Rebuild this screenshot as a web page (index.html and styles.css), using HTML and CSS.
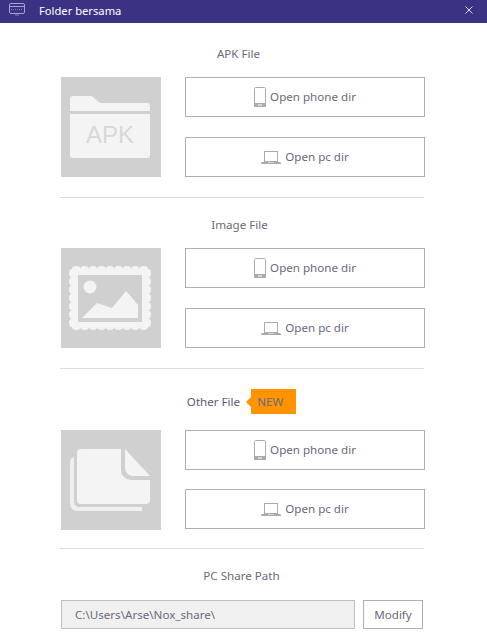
FILE: index.html
```html
<!DOCTYPE html>
<html lang="en">
<head>
    <meta charset="UTF-8">
    <meta name="viewport" content="width=device-width, initial-scale=1.0">
    <title>Folder bersama</title>
    <link rel="stylesheet" href="styles.css">
</head>
<body>
    <svg class="defs" width="0" height="0">
        <symbol id="phone" viewBox="0 0 12 20">
            <rect x="0.500" y="0.500" width="11" height="19" rx="1" fill="none" stroke="#ababab"/>
            <path fill="#ababab" fill-rule="evenodd" d="M0 16h12v3a1 1 0 0 1-1 1H1a1 1 0 0 1-1-1zM4 17.500v1h4v-1z"/>
        </symbol>
        <symbol id="laptop" viewBox="0 0 20 13">
            <rect x="3.500" y="0.500" width="13" height="10" fill="none" stroke="#ababab"/>
            <path fill="#ababab" fill-rule="evenodd" d="M1 11h18l1 1v1H0v-1zM7 11.500v.5h6v-.5z"/>
        </symbol>
    </svg>

    <!-- Title bar -->
    <div class="titlebar">
        <svg class="title-icon" width="16" height="14" viewBox="0 0 16 14">
            <rect x="0.500" y="0.500" width="15" height="10" rx="1.500" fill="none" stroke="#a7a3cf"/>
            <path d="M1 3.500h14" stroke="#a7a3cf"/>
            <path d="M2 6.500h12" stroke="#8480bb" stroke-dasharray="1 1"/>
            <path d="M6 12h4" stroke="#8480bb"/>
        </svg>
        <span class="title-text">Folder bersama</span>
        <svg class="close" width="8" height="8" viewBox="0 0 8 8">
            <path d="M0.500 0.500l7 7M7.500 0.500l-7 7" stroke="#dcdcdc" fill="none"/>
        </svg>
    </div>

    <div class="content">
        <!-- APK section -->
        <h2 class="section-title title-apk">APK File</h2>
        <div class="section-row">
            <div class="tile">
                <svg width="100" height="100" viewBox="0 0 100 100">
                    <path fill="#f4f4f4" d="M9 34V22a3 3 0 0 1 3-3h18a3 3 0 0 1 2 1l6 5a3 3 0 0 0 2 1h46a3 3 0 0 1 3 3v5z"/>
                    <path fill="#f4f4f4" d="M9 37h80v41a3 3 0 0 1-3 3H12a3 3 0 0 1-3-3z"/>
                    <text class="apk-label" x="49" y="66" text-anchor="middle">APK</text>
                </svg>
            </div>
            <div class="buttons">
                <button class="btn"><svg width="12" height="20"><use href="#phone"/></svg>Open phone dir</button>
                <button class="btn"><svg width="20" height="13"><use href="#laptop"/></svg>Open pc dir</button>
            </div>
        </div>
        <hr class="divider">

        <!-- Image section -->
        <h2 class="section-title title-image">Image File</h2>
        <div class="section-row">
            <div class="tile">
                <svg width="100" height="100" viewBox="0 0 100 100">
                    <path fill="#f4f4f4" fill-rule="evenodd" d="M11 21a4.222 3 0 0 1 8.444 0a4.222 3 0 0 1 8.444 0a4.222 3 0 0 1 8.444 0a4.222 3 0 0 1 8.444 0a4.222 3 0 0 1 8.444 0a4.222 3 0 0 1 8.444 0a4.222 3 0 0 1 8.444 0a4.222 3 0 0 1 8.444 0a4.222 3 0 0 1 8.444 0a3 4.143 0 0 1 0 8.286a3 4.143 0 0 1 0 8.286a3 4.143 0 0 1 0 8.286a3 4.143 0 0 1 0 8.286a3 4.143 0 0 1 0 8.286a3 4.143 0 0 1 0 8.286a3 4.143 0 0 1 0 8.286a4.222 3 0 0 1-8.444 0a4.222 3 0 0 1-8.444 0a4.222 3 0 0 1-8.444 0a4.222 3 0 0 1-8.444 0a4.222 3 0 0 1-8.444 0a4.222 3 0 0 1-8.444 0a4.222 3 0 0 1-8.444 0a4.222 3 0 0 1-8.444 0a4.222 3 0 0 1-8.444 0a3 4.143 0 0 1 0-8.286a3 4.143 0 0 1 0-8.286a3 4.143 0 0 1 0-8.286a3 4.143 0 0 1 0-8.286a3 4.143 0 0 1 0-8.286a3 4.143 0 0 1 0-8.286a3 4.143 0 0 1 0-8.286zM17 27v47h64V27z"/>
                    <circle cx="29" cy="39" r="6.500" fill="#f4f4f4"/>
                    <path fill="#f4f4f4" d="M21 70l15-15 15 5 14-17 12 14v13z"/>
                </svg>
            </div>
            <div class="buttons">
                <button class="btn"><svg width="12" height="20"><use href="#phone"/></svg>Open phone dir</button>
                <button class="btn"><svg width="20" height="13"><use href="#laptop"/></svg>Open pc dir</button>
            </div>
        </div>
        <hr class="divider">

        <!-- Other section -->
        <div class="other-head">
            <h2 class="section-title title-other">Other File</h2>
            <span class="new-badge">NEW</span>
        </div>
        <div class="section-row">
            <div class="tile">
                <svg width="100" height="100" viewBox="0 0 100 100">
                    <path fill="#efefef" d="M13 27v45a5 5 0 0 0 5 5h63v4H16a7 7 0 0 1-7-7V33a6 6 0 0 1 4-6z"/>
                    <path fill="#f4f4f4" d="M20 19h40v21a10 10 0 0 0 10 10h19v20a4 4 0 0 1-4 4H20a4 4 0 0 1-4-4V23a4 4 0 0 1 4-4z"/>
                    <path fill="#f4f4f4" d="M64 19l25 27H72a8 8 0 0 1-8-8z"/>
                </svg>
            </div>
            <div class="buttons buttons-tight">
                <button class="btn"><svg width="12" height="20"><use href="#phone"/></svg>Open phone dir</button>
                <button class="btn"><svg width="20" height="13"><use href="#laptop"/></svg>Open pc dir</button>
            </div>
        </div>
        <hr class="divider divider-last">

        <!-- Share path -->
        <h2 class="section-title title-path">PC Share Path</h2>
        <div class="path-row">
            <div class="path-input">C:\Users\Arse\Nox_share\</div>
            <button class="modify">Modify</button>
        </div>
    </div>
</body>
</html>
```

FILE: styles.css
```css
body {
    font-family: 'Noto Sans', 'Open Sans', sans-serif;
    background-color: #ffffff;
    margin: 0;
    padding: 0;
    color: #6a6a78;
    font-size: 11.6px;
}

.defs {
    display: block;
    height: 0;
}

.titlebar {
    display: flex;
    align-items: center;
    height: 23px;
    background-color: #3c3284;
    color: #ffffff;
    padding: 0 14px 3px 9px;
    box-sizing: border-box;
    font-size: 11.2px;
}

.title-icon {
    margin-right: 14px;
}

.title-text {
    flex: 1;
}

.close {
    display: block;
}

.content {
    padding: 0 63px 0 60px;
}

.section-title {
    margin: 0;
    font-size: 11.6px;
    font-weight: normal;
    line-height: 18px;
    text-align: center;
}

.title-apk {
    padding: 22px 7px 14px 0;
}

.title-image {
    padding: 18px 5px 14px 0;
}

.title-path {
    padding: 18px 1px 15px 0;
}

.other-head {
    display: flex;
    justify-content: center;
    align-items: center;
    padding: 20px 1px 16px 0;
}

.title-other {
    color: #5f5878;
}

.new-badge {
    position: relative;
    margin-left: 11px;
    background-color: #ff9400;
    color: #6b6a80;
    width: 45px;
    height: 25px;
    line-height: 25px;
    padding-left: 6px;
    box-sizing: border-box;
}

.new-badge::before {
    content: "";
    position: absolute;
    left: -5px;
    top: 8px;
    border-top: 5px solid transparent;
    border-bottom: 5px solid transparent;
    border-right: 5px solid #ff9400;
}

.section-row {
    display: flex;
    padding-left: 1px;
}

.tile {
    width: 100px;
    height: 100px;
    background-color: #d0d0d0;
    flex-shrink: 0;
}

.tile svg {
    display: block;
}

.apk-label {
    font-family: 'Liberation Sans', sans-serif;
    font-size: 24px;
    fill: #d8d8d8;
}

.buttons {
    display: flex;
    flex-direction: column;
    gap: 20px;
    margin-left: 24px;
}

.buttons-tight {
    gap: 19px;
}

.btn {
    display: flex;
    align-items: center;
    justify-content: center;
    gap: 4px;
    width: 240px;
    height: 40px;
    background-color: #ffffff;
    border: 1px solid #b0b0b0;
    color: #6a6a78;
    font-family: inherit;
    font-size: 11.6px;
    line-height: 16px;
    padding: 0;
}

.divider {
    border: none;
    border-top: 1px solid #dddddd;
    margin: 20px 0 0 0;
    height: 0;
}

.divider-last {
    margin-top: 18px;
}

.path-row {
    display: flex;
    gap: 8px;
    padding-left: 1px;
}

.path-input {
    width: 294px;
    height: 29px;
    line-height: 27px;
    box-sizing: border-box;
    background-color: #f0f0f0;
    border: 1px solid #c0c0c0;
    padding-left: 13px;
}

.modify {
    width: 60px;
    height: 29px;
    background-color: #ffffff;
    border: 1px solid #b0b0b0;
    color: #6a6a78;
    font-family: inherit;
    font-size: 11.6px;
    padding: 0;
}
```
